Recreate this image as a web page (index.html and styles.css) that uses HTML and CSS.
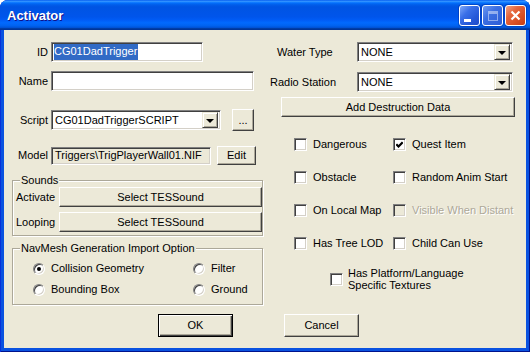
FILE: index.html
```html
<!DOCTYPE html>
<html lang="en">
<head>
  <meta charset="UTF-8">
  <title>Activator</title>
  <link rel="stylesheet" href="styles.css">
</head>
<body>
  <div class="window">
    <div class="titlebar">
      <span class="title">Activator</span>
      <div class="tbtns">
        <span class="tbtn min"><i></i></span>
        <span class="tbtn max"><i></i></span>
        <span class="tbtn close">
          <svg width="11" height="11" viewBox="0 0 11 11"><path d="M1.5 1.5L9.5 9.5M9.5 1.5L1.5 9.5" stroke="#fff" stroke-width="2.2" fill="none"/></svg>
        </span>
      </div>
    </div>
    <div class="client">
      <div class="panes">
        <div class="left">
          <div class="field row-id">
            <span class="lbl">ID</span>
            <div class="edit w-id"><span class="sel">CG01DadTrigger</span></div>
          </div>
          <div class="field row-name">
            <span class="lbl">Name</span>
            <div class="edit w-name"></div>
          </div>
          <div class="field row-script">
            <span class="lbl">Script</span>
            <div class="combo w-script"><span class="val">CG01DadTriggerSCRIPT</span><span class="drop"></span></div>
            <button class="btn dots">...</button>
          </div>
          <div class="field row-model">
            <span class="lbl">Model</span>
            <div class="edit readonly w-model">Triggers\TrigPlayerWall01.NIF</div>
            <button class="btn edit-btn">Edit</button>
          </div>
          <div class="group sounds">
            <span class="legend">Sounds</span>
            <div class="group-body">
              <div class="sound-row">
                <span class="slbl">Activate</span>
                <button class="btn">Select TESSound</button>
              </div>
              <div class="sound-row">
                <span class="slbl">Looping</span>
                <button class="btn">Select TESSound</button>
              </div>
            </div>
          </div>
          <div class="group navmesh">
            <span class="legend">NavMesh Generation Import Option</span>
            <div class="group-body radio-grid">
              <label class="opt"><span class="radio on"></span>Collision Geometry</label>
              <label class="opt"><span class="radio"></span>Filter</label>
              <label class="opt"><span class="radio"></span>Bounding Box</label>
              <label class="opt"><span class="radio"></span>Ground</label>
            </div>
          </div>
        </div>
        <div class="right">
          <div class="rrow water">
            <span class="rlbl">Water Type</span>
            <div class="combo w-rcombo"><span class="val">NONE</span><span class="drop"></span></div>
          </div>
          <div class="rrow radio-st">
            <span class="rlbl">Radio Station</span>
            <div class="combo w-rcombo"><span class="val">NONE</span><span class="drop"></span></div>
          </div>
          <button class="btn destruct">Add Destruction Data</button>
          <div class="check-grid">
            <label class="opt"><span class="check"></span>Dangerous</label>
            <label class="opt"><span class="check"><svg width="7" height="7" viewBox="0 0 7 7"><path d="M0.3 3.3L2.5 5.5L6.7 1.3" stroke="#000" stroke-width="2.2" fill="none"/></svg></span>Quest Item</label>
            <label class="opt"><span class="check"></span>Obstacle</label>
            <label class="opt"><span class="check"></span>Random Anim Start</label>
            <label class="opt"><span class="check"></span>On Local Map</label>
            <label class="opt disabled"><span class="check"></span>Visible When Distant</label>
            <label class="opt"><span class="check"></span>Has Tree LOD</label>
            <label class="opt"><span class="check"></span>Child Can Use</label>
          </div>
          <label class="opt platform"><span class="check"></span><span class="two-line">Has Platform/Language<br>Specific Textures</span></label>
        </div>
      </div>
      <div class="actions">
        <button class="btn default">OK</button>
        <button class="btn">Cancel</button>
      </div>
    </div>
  </div>
</body>
</html>
```

FILE: styles.css
```css
* {
  box-sizing: border-box;
}
body {
  margin: 0;
  font-family: "Liberation Sans", Arial, sans-serif;
  font-size: 11px;
  line-height: 13px;
  color: #000;
}

/* window frame */
.window {
  width: 530px;
  height: 352px;
  display: flex;
  flex-direction: column;
  background: #0A52E0;
  border-radius: 8px 8px 0 0;
  box-shadow: inset 1px 0 #0831D9, inset -1px -1px #00138C;
}
.titlebar {
  height: 30px;
  flex: none;
  display: flex;
  align-items: center;
  padding: 0 4px 0 7px;
  border-radius: 8px 8px 0 0;
  background: linear-gradient(to bottom, #0058EE 0%, #3593FF 4%, #288EFF 6%, #127DFF 8%, #036FFC 10%, #0262EE 14%, #0057E5 20%, #0054E3 24%, #0055EB 56%, #005BF5 66%, #026AFE 76%, #0062EF 86%, #0052D6 92%, #0040AB 94%, #003092 100%);
}
.title {
  flex: 1;
  color: #fff;
  font-weight: bold;
  font-size: 13px;
  text-shadow: 1px 1px #0F1089;
  margin-top: 1px;
}
.tbtns {
  display: flex;
  gap: 2px;
  margin-top: 1px;
}
.tbtn {
  width: 21px;
  height: 21px;
  border: 1px solid #fff;
  border-radius: 3px;
  display: flex;
  align-items: center;
  justify-content: center;
  background: linear-gradient(135deg, #7FA8F8 0%, #3A6FE8 35%, #2458D8 70%, #1F4CC8 100%);
  box-shadow: 0 0 0 1px rgba(0, 30, 140, .35);
}
.tbtn.min {
  align-items: flex-end;
  justify-content: flex-start;
  padding: 0 0 3px 4px;
}
.tbtn.min i {
  display: block;
  width: 7px;
  height: 3px;
  background: #fff;
}
.tbtn.max i {
  display: block;
  width: 10px;
  height: 10px;
  border: 1px solid rgba(255, 255, 255, .45);
  border-top-width: 3px;
}
.tbtn.max {
  background: linear-gradient(135deg, #6F9AF2 0%, #3D6FE2 40%, #2C5CD6 100%);
}
.tbtn.close {
  background: linear-gradient(135deg, #F2A283 0%, #E5653C 35%, #DA4E22 70%, #C63E14 100%);
}

/* client area */
.client {
  flex: 1;
  margin: 0 4px 4px;
  background: #ECE9D8;
  display: flex;
  flex-direction: column;
}
.panes {
  display: flex;
  gap: 7px;
  padding: 12px 0 0 8px;
}
.left {
  width: 251px;
  flex: none;
  display: flex;
  flex-direction: column;
}
.right {
  width: 245px;
  display: flex;
  flex-direction: column;
}

/* controls */
.edit, .combo {
  height: 20px;
  background: #fff;
  border: 1px solid;
  border-color: #808080 #fff #fff #808080;
  box-shadow: inset 1px 1px #404040, inset -1px -1px #D4D0C8;
  display: flex;
  align-items: center;
  padding-left: 3px;
  white-space: nowrap;
  overflow: hidden;
}
.edit.readonly {
  background: #ECE9D8;
}
.sel {
  background: #316AC5;
  color: #fff;
  padding: 1px 1px 2px 0;
  margin-left: -1px;
}
.combo {
  padding: 2px 2px 2px 3px;
}
.combo .val {
  flex: 1;
}
.drop {
  width: 16px;
  height: 16px;
  flex: none;
  background: #ECE9D8;
  border: 1px solid;
  border-color: #ECE9D8 #404040 #404040 #ECE9D8;
  box-shadow: inset 1px 1px #fff, inset -1px -1px #ACA899;
  display: flex;
  align-items: center;
  justify-content: center;
}
.drop::after {
  content: "";
  border-left: 4px solid transparent;
  border-right: 4px solid transparent;
  border-top: 4px solid #000;
  margin-top: 1px;
}
.btn {
  font: inherit;
  color: #000;
  padding: 0;
  background: #ECE9D8;
  border: 1px solid;
  border-color: #fff #404040 #404040 #fff;
  box-shadow: inset -1px -1px #ACA899;
  height: 20px;
}
.btn.default {
  border: 1px solid #000;
  box-shadow: inset 1px 1px #fff, inset -1px -1px #404040, inset -2px -2px #ACA899;
}

/* left column rows */
.field {
  display: flex;
  align-items: center;
}
.lbl {
  width: 36px;
  margin-right: 3px;
  text-align: right;
}
.w-id {
  width: 152px;
}
.row-name {
  margin-top: 9px;
}
.w-name {
  width: 203px;
}
.row-script {
  margin-top: 18px;
  height: 22px;
}
.w-script {
  width: 170px;
}
.dots {
  width: 22px;
  height: 22px;
  margin-left: 11px;
}
.row-model {
  margin-top: 15px;
  height: 19px;
}
.w-model {
  width: 160px;
  height: 18px;
}
.edit-btn {
  width: 39px;
  height: 19px;
  margin-left: 6px;
}

/* group boxes */
.group {
  border: 1px solid #ACA899;
  box-shadow: inset 1px 1px #fff, 1px 1px #fff;
}
.legend {
  display: table;
  margin: -7px 0 0 7px;
  padding: 0 1px;
  line-height: 13px;
  background: #ECE9D8;
}
.sounds {
  margin-top: 15px;
}
.sounds .group-body {
  padding: 0 0 3px 3px;
}
.sound-row {
  display: flex;
  align-items: center;
}
.sound-row + .sound-row {
  margin-top: 5px;
}
.slbl {
  width: 43px;
}
.sound-row .btn {
  flex: 1;
}
.navmesh {
  margin-top: 12px;
}
.radio-grid {
  padding: 7px 0 8px 20px;
  display: grid;
  grid-template-columns: 160px auto;
  row-gap: 8px;
}
.opt {
  display: flex;
  align-items: center;
  gap: 6px;
  white-space: nowrap;
}
.radio {
  width: 12px;
  height: 12px;
  border-radius: 50%;
  background: #fff;
  border: 1px solid;
  border-color: #808080 #fff #fff #808080;
  box-shadow: inset 1px 1px #404040, inset -1px -1px #D4D0C8;
  display: flex;
  align-items: center;
  justify-content: center;
}
.radio.on::after {
  content: "";
  width: 4px;
  height: 4px;
  border-radius: 50%;
  background: #000;
}

/* right column */
.rrow {
  display: flex;
  align-items: center;
}
.rlbl {
  width: 87px;
}
.water .rlbl {
  padding-left: 7px;
}
.w-rcombo {
  width: 156px;
}
.radio-st {
  margin-top: 10px;
}
.destruct {
  margin: 5px 0 0 11px;
  width: 234px;
}
.check-grid {
  margin-top: 21px;
  padding-left: 24px;
  display: grid;
  grid-template-columns: 99px auto;
  row-gap: 20px;
}
.check {
  width: 13px;
  height: 13px;
  flex: none;
  background: #fff;
  border: 1px solid;
  border-color: #808080 #fff #fff #808080;
  box-shadow: inset 1px 1px #404040, inset -1px -1px #D4D0C8;
  display: flex;
  align-items: center;
  justify-content: center;
}
.check svg {
  display: block;
}
.opt.disabled {
  color: #ACA899;
  text-shadow: 1px 1px #fff;
}
.opt.disabled .check {
  background: #ECE9D8;
}
.platform {
  margin-top: 17px;
  padding-left: 60px;
  gap: 5px;
}
.two-line {
  line-height: 12px;
}

/* bottom buttons */
.actions {
  margin-top: auto;
  display: flex;
  gap: 51px;
  padding: 0 0 11px 154px;
}
.actions .btn {
  width: 75px;
  height: 23px;
}
```
